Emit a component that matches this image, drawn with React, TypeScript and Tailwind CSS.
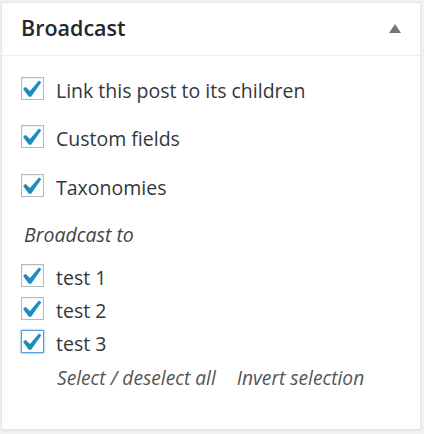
import React from 'react';

const font = { fontFamily: '"Open Sans", "Noto Sans", sans-serif' };

function Check({ focused = false }: { focused?: boolean }) {
  return (
    <span
      className={
        'relative block h-[23px] w-[23px] shrink-0 bg-white border ' +
        (focused
          ? 'border-[#5b9dd9] shadow-[0_0_2px_rgba(30,140,190,0.8)]'
          : 'border-[#b4b9be] shadow-[inset_0_1px_2px_rgba(0,0,0,0.07)]')
      }
    >
      <svg
        viewBox="0 0 20 20"
        className="absolute left-[-9.5px] top-[-6.5px] h-[35px] w-[35px] overflow-visible"
      >
        <path d="M14.83 4.89l1.34.94-5.81 8.38H9.02L5.78 9.67l1.34-1.25 2.57 2.4z" fill="#1e8cbe" />
      </svg>
    </span>
  );
}

function Row({ label, focused, className }: { label: string; focused?: boolean; className?: string }) {
  return (
    <label className={'flex h-[23px] items-center gap-[12px] ' + (className || '')}>
      <Check focused={focused} />
      <span className="pt-[5px] text-[19.5px] leading-none text-[#32373c]">{label}</span>
    </label>
  );
}

export default function App() {
  return (
    <div className="min-h-[434px] w-[424px] bg-[#f1f1f1] pt-[2px] pl-[1px]" style={font}>
      <div className="h-[428px] w-[420px] border border-[#e5e5e5] bg-white shadow-[0_1px_1px_rgba(0,0,0,0.04)]">
        <div className="flex h-[53px] items-center justify-between border-b border-[#eeeeee] pb-[1px] pl-[19px] pr-[19px]">
          <h2 className="text-[21.5px] font-semibold text-[#23282d]">Broadcast</h2>
          <svg width="12" height="9" viewBox="0 0 12 9">
            <path d="M6 0L12 9H0z" fill="#72777c" />
          </svg>
        </div>
        <div className="flex flex-col pl-[19px]">
          <Row label="Link this post to its children" className="mt-[21px]" />
          <Row label="Custom fields" className="mt-[25px]" />
          <Row label="Taxonomies" className="mt-[26px]" />
          <div className="mt-[26px] flex h-[24px] items-center pl-[3px] text-[19.5px] italic text-[#444]">
            Broadcast to
          </div>
          <Row label="test 1" className="mt-[17px]" />
          <Row label="test 2" className="mt-[10px]" />
          <Row label="test 3" focused className="mt-[10px]" />
          <div className="mt-[13px] flex h-[24px] items-center gap-[21px] pl-[36px] text-[19.2px] italic text-[#555]">
            <span>Select / deselect all</span>
            <span>Invert selection</span>
          </div>
        </div>
      </div>
    </div>
  );
}
